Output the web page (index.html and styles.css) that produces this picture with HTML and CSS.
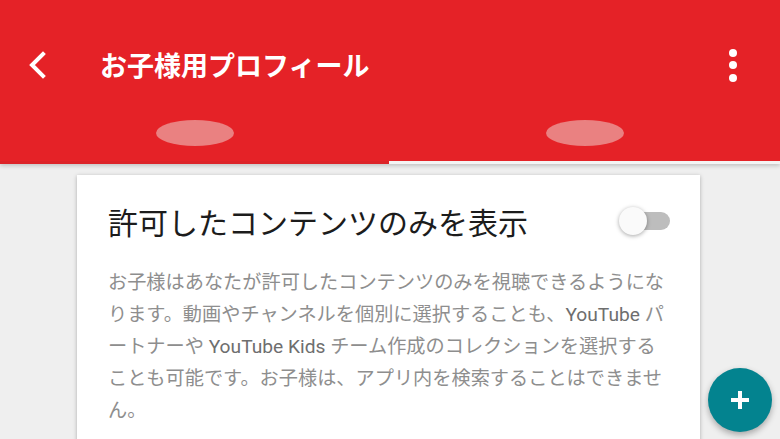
FILE: index.html
```html
<!DOCTYPE html>
<html lang="ja">
<head>
  <meta charset="UTF-8" />
  <meta name="viewport" content="width=device-width, initial-scale=1" />
  <title>お子様用プロフィール</title>
  <link rel="stylesheet" href="styles.css">
</head>
<body>
  <!-- App bar with tabs -->
  <header class="appbar">
    <div class="toolbar">
      <a href="#" class="back-btn" aria-label="戻る">
        <svg width="24" height="28" viewBox="0 0 24 28">
          <path d="M16 3 L5 14 L16 25" fill="none" stroke="#fff" stroke-width="4" stroke-linecap="square" />
        </svg>
      </a>
      <h1 class="title">お子様用プロフィール</h1>
      <div class="menu-btn" aria-label="メニュー">
        <span class="dot"></span>
        <span class="dot"></span>
        <span class="dot"></span>
      </div>
    </div>
    <div class="tabs">
      <div class="tab tab-active"><span class="tab-pill"></span></div>
      <div class="tab"><span class="tab-pill"></span></div>
    </div>
  </header>

  <main class="content">
    <section class="card">
      <div class="card-head">
        <h2 class="card-title">許可したコンテンツのみを表示</h2>
        <div class="switch">
          <span class="switch-track"></span>
          <span class="switch-thumb"></span>
        </div>
      </div>
      <p class="card-text">
        お子様はあなたが許可したコンテンツのみを視聴できるようにな<br>
        ります。動画やチャンネルを個別に選択することも、<span class="brand">YouTube</span> パ<br>
        ートナーや <span class="brand">YouTube Kids</span> チーム作成のコレクションを選択する<br>
        ことも可能です。お子様は、アプリ内を検索することはできませ<br>
        ん。
      </p>
    </section>
  </main>

  <button class="fab" aria-label="追加">
    <svg width="22" height="22" viewBox="0 0 22 22">
      <path d="M11 2 V20 M2 11 H20" stroke="#fff" stroke-width="4" />
    </svg>
  </button>
</body>
</html>
```

FILE: styles.css
```css
html {
  overflow: hidden;
}

body {
  margin: 0;
  font-family: 'Roboto', 'Noto Sans CJK JP', sans-serif;
  background: #efefef;
  color: #212121;
}

.appbar {
  background-color: #e52227;
  box-shadow: 0 2px 4px rgba(0, 0, 0, 0.18);
  position: relative;
  z-index: 1;
}

.toolbar {
  display: flex;
  align-items: center;
  height: 90px;
  padding: 20px 43px 0 27px;
}

.back-btn {
  display: flex;
  width: 24px;
  height: 28px;
}

.title {
  margin: 0 0 0 49px;
  flex: 1;
  font-family: 'Noto Sans CJK JP', sans-serif;
  font-size: 27px;
  font-weight: 700;
  color: #fff;
  line-height: 40px;
}

.menu-btn {
  display: flex;
  flex-direction: column;
  gap: 4.5px;
}

.dot {
  width: 8px;
  height: 8px;
  border-radius: 50%;
  background: #fff;
}

.tabs {
  display: flex;
}

.tab {
  display: flex;
  justify-content: center;
  align-items: center;
  height: 46px;
  padding-bottom: 5px;
  border-bottom: 3px solid #f4f4f4;
  width: 391px;
}

.tab-active {
  width: 389px;
  border-bottom-color: #dc2328;
}

.tab-pill {
  width: 78px;
  height: 26px;
  border-radius: 50%;
  background: #ea8181;
}

.content {
  padding: 11px 80px 0 77px;
}

.card {
  background: #fff;
  min-height: 320px;
  padding: 26px 30px 0 31px;
  box-shadow: 0 1px 4px rgba(0, 0, 0, 0.28);
}

.card-head {
  display: flex;
  align-items: center;
  justify-content: space-between;
}

.card-title {
  margin: 0;
  font-family: 'Noto Sans CJK JP', sans-serif;
  font-size: 30px;
  font-weight: 400;
  line-height: 40px;
  color: #1c1c1c;
}

.switch {
  position: relative;
  width: 51px;
  height: 28px;
}

.switch-track {
  position: absolute;
  right: 0;
  top: 5px;
  width: 46px;
  height: 18px;
  border-radius: 9px;
  background: #bdbdbd;
}

.switch-thumb {
  position: absolute;
  left: 0;
  top: 0;
  width: 28px;
  height: 28px;
  border-radius: 50%;
  background: #fafafa;
  box-shadow: 0 1px 4px rgba(0, 0, 0, 0.35);
}

.card-text {
  margin: 26px 0 0;
  font-size: 19.2px;
  line-height: 32px;
  color: #8e8e8e;
}

.brand {
  color: #6e6e6e;
}

.fab {
  position: absolute;
  left: 708px;
  top: 368px;
  width: 64px;
  height: 64px;
  border: none;
  border-radius: 50%;
  background: #03838f;
  display: flex;
  align-items: center;
  justify-content: center;
  box-shadow: 0 3px 6px rgba(0, 0, 0, 0.3);
  cursor: pointer;
}
```
